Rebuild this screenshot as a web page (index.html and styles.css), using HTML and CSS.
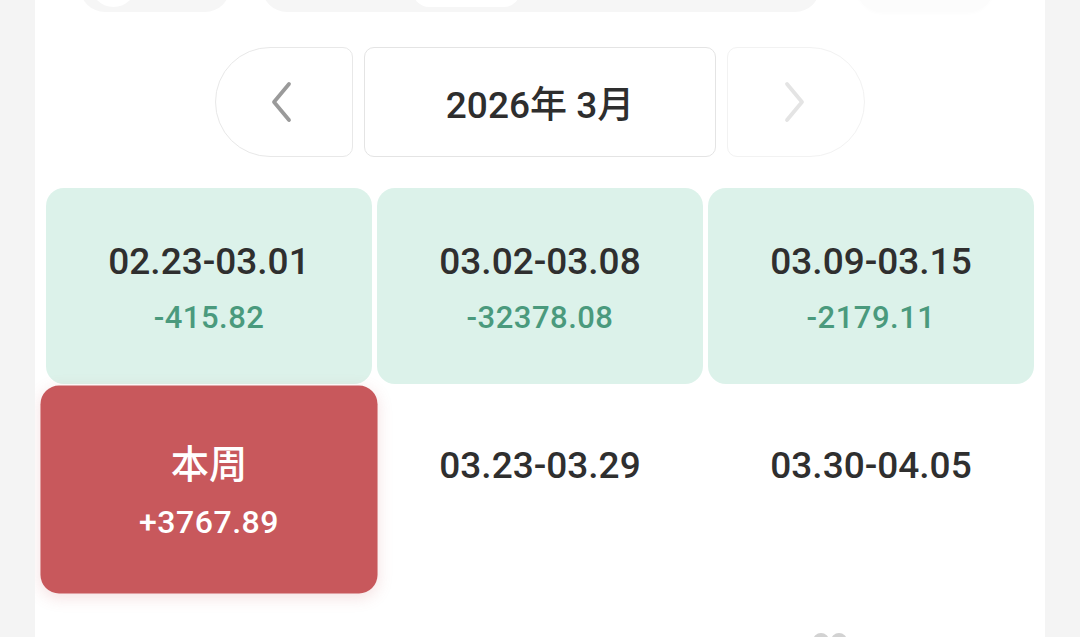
FILE: index.html
```html
<!DOCTYPE html>
<html lang="zh-CN">
<head>
  <meta charset="UTF-8">
  <meta name="viewport" content="width=device-width, initial-scale=1.0">
  <title>周账单</title>
  <link rel="stylesheet" href="styles.css">
</head>
<body>
  <div class="panel">
    <div class="tab-row">
      <div class="tab tab-left"><span class="dot"></span></div>
      <div class="tab tab-mid"><span class="chip"></span></div>
      <div class="tab tab-right"></div>
    </div>

    <div class="month-nav">
      <button class="nav-btn prev" type="button" aria-label="上个月">
        <svg viewBox="0 0 24 42" width="24" height="42"><path d="M20 3 L5 21 L20 39" fill="none" stroke="currentColor" stroke-width="3.8" stroke-linecap="round" stroke-linejoin="round"/></svg>
      </button>
      <div class="month-label">2026年 3月</div>
      <button class="nav-btn next" type="button" aria-label="下个月">
        <svg viewBox="0 0 24 42" width="24" height="42"><path d="M4 3 L19 21 L4 39" fill="none" stroke="currentColor" stroke-width="3.8" stroke-linecap="round" stroke-linejoin="round"/></svg>
      </button>
    </div>

    <div class="week-grid">
      <div class="week past">
        <div class="range">02.23-03.01</div>
        <div class="amount">-415.82</div>
      </div>
      <div class="week past">
        <div class="range">03.02-03.08</div>
        <div class="amount">-32378.08</div>
      </div>
      <div class="week past">
        <div class="range">03.09-03.15</div>
        <div class="amount">-2179.11</div>
      </div>
      <div class="week current">
        <div class="range">本周</div>
        <div class="amount">+3767.89</div>
      </div>
      <div class="week">
        <div class="range">03.23-03.29</div>
        <div class="amount"></div>
      </div>
      <div class="week">
        <div class="range">03.30-04.05</div>
        <div class="amount"></div>
      </div>
    </div>

    <div class="more-row">
      <svg class="more-icon" viewBox="0 0 36 20" width="36" height="20"><circle cx="9" cy="10" r="8" fill="#d2d2d2"/><circle cx="27" cy="10" r="8" fill="#d2d2d2"/></svg>
    </div>
  </div>
</body>
</html>
```

FILE: styles.css
```css
* {
  margin: 0;
  padding: 0;
  box-sizing: border-box;
}

html, body {
  height: 100%;
}

body {
  background: #f4f4f4;
  font-family: Roboto, "Noto Sans CJK SC", "Noto Sans", sans-serif;
  color: #333;
  overflow: hidden;
}

.panel {
  margin: 0 35px;
  height: 637px;
  background: #fff;
  padding: 0 11px;
  overflow: hidden;
}

/* half-hidden tabs at the top */
.tab-row {
  display: flex;
  height: 50px;
  margin-top: -38px;
  margin-bottom: 35px;
  padding-left: 34px;
}

.tab {
  height: 50px;
  border-radius: 26px;
  background: #f6f6f6;
  position: relative;
}

.tab-left {
  width: 150px;
}

.tab-left .dot {
  position: absolute;
  left: 10px;
  bottom: 5px;
  width: 47px;
  height: 47px;
  border-radius: 50%;
  background: #fff;
}

.tab-mid {
  width: 558px;
  margin-left: 32px;
}

.tab-mid .chip {
  position: absolute;
  left: 151px;
  bottom: 5px;
  width: 107px;
  height: 40px;
  border-radius: 16px;
  background: #fff;
}

.tab-right {
  width: 136px;
  margin-left: 37px;
  background: #fcfcfc;
  box-shadow: 0 1px 4px rgba(0, 0, 0, 0.02);
}

/* month switcher */
.month-nav {
  display: flex;
  justify-content: center;
  gap: 11px;
  height: 110px;
  margin-bottom: 31px;
}

.nav-btn {
  width: 138px;
  height: 110px;
  background: #fff;
  border: 1px solid #e8e8e8;
  display: flex;
  align-items: center;
  justify-content: center;
  cursor: pointer;
}

.nav-btn.prev {
  border-radius: 55px 10px 10px 55px;
  color: #9a9a9a;
  padding-right: 6px;
}

.nav-btn.next {
  border-radius: 10px 55px 55px 10px;
  border-color: #f2f2f2;
  color: #e4e4e4;
  padding-right: 2px;
}

.month-label {
  width: 352px;
  height: 110px;
  border: 1px solid #e4e4e4;
  border-radius: 10px;
  display: flex;
  align-items: center;
  justify-content: center;
  font-size: 37px;
  font-weight: 500;
  color: #2e2e2e;
}

/* weeks */
.week-grid {
  display: grid;
  grid-template-columns: repeat(3, 326px);
  grid-template-rows: 196px 201px;
  gap: 5px;
}

.week {
  border-radius: 18px;
  display: flex;
  flex-direction: column;
  align-items: center;
  justify-content: center;
  gap: 15px;
  padding-top: 4px;
}

.range {
  font-size: 37px;
  line-height: 44px;
  font-weight: 500;
  color: #2f2f2f;
}

.amount {
  font-size: 31px;
  line-height: 37px;
  height: 37px;
  font-weight: 500;
  letter-spacing: 0.5px;
  color: #4a9a7d;
}

.week.past {
  background: #dcf2ea;
}

.week.current {
  background: #c8585c;
  transform: scale(1.034);
  box-shadow: 0 4px 14px rgba(200, 88, 92, 0.18);
}

.week.current .range,
.week.current .amount {
  color: #fff;
}

.more-row {
  display: flex;
  justify-content: flex-end;
  padding-right: 186px;
  margin-top: 41px;
}
```
